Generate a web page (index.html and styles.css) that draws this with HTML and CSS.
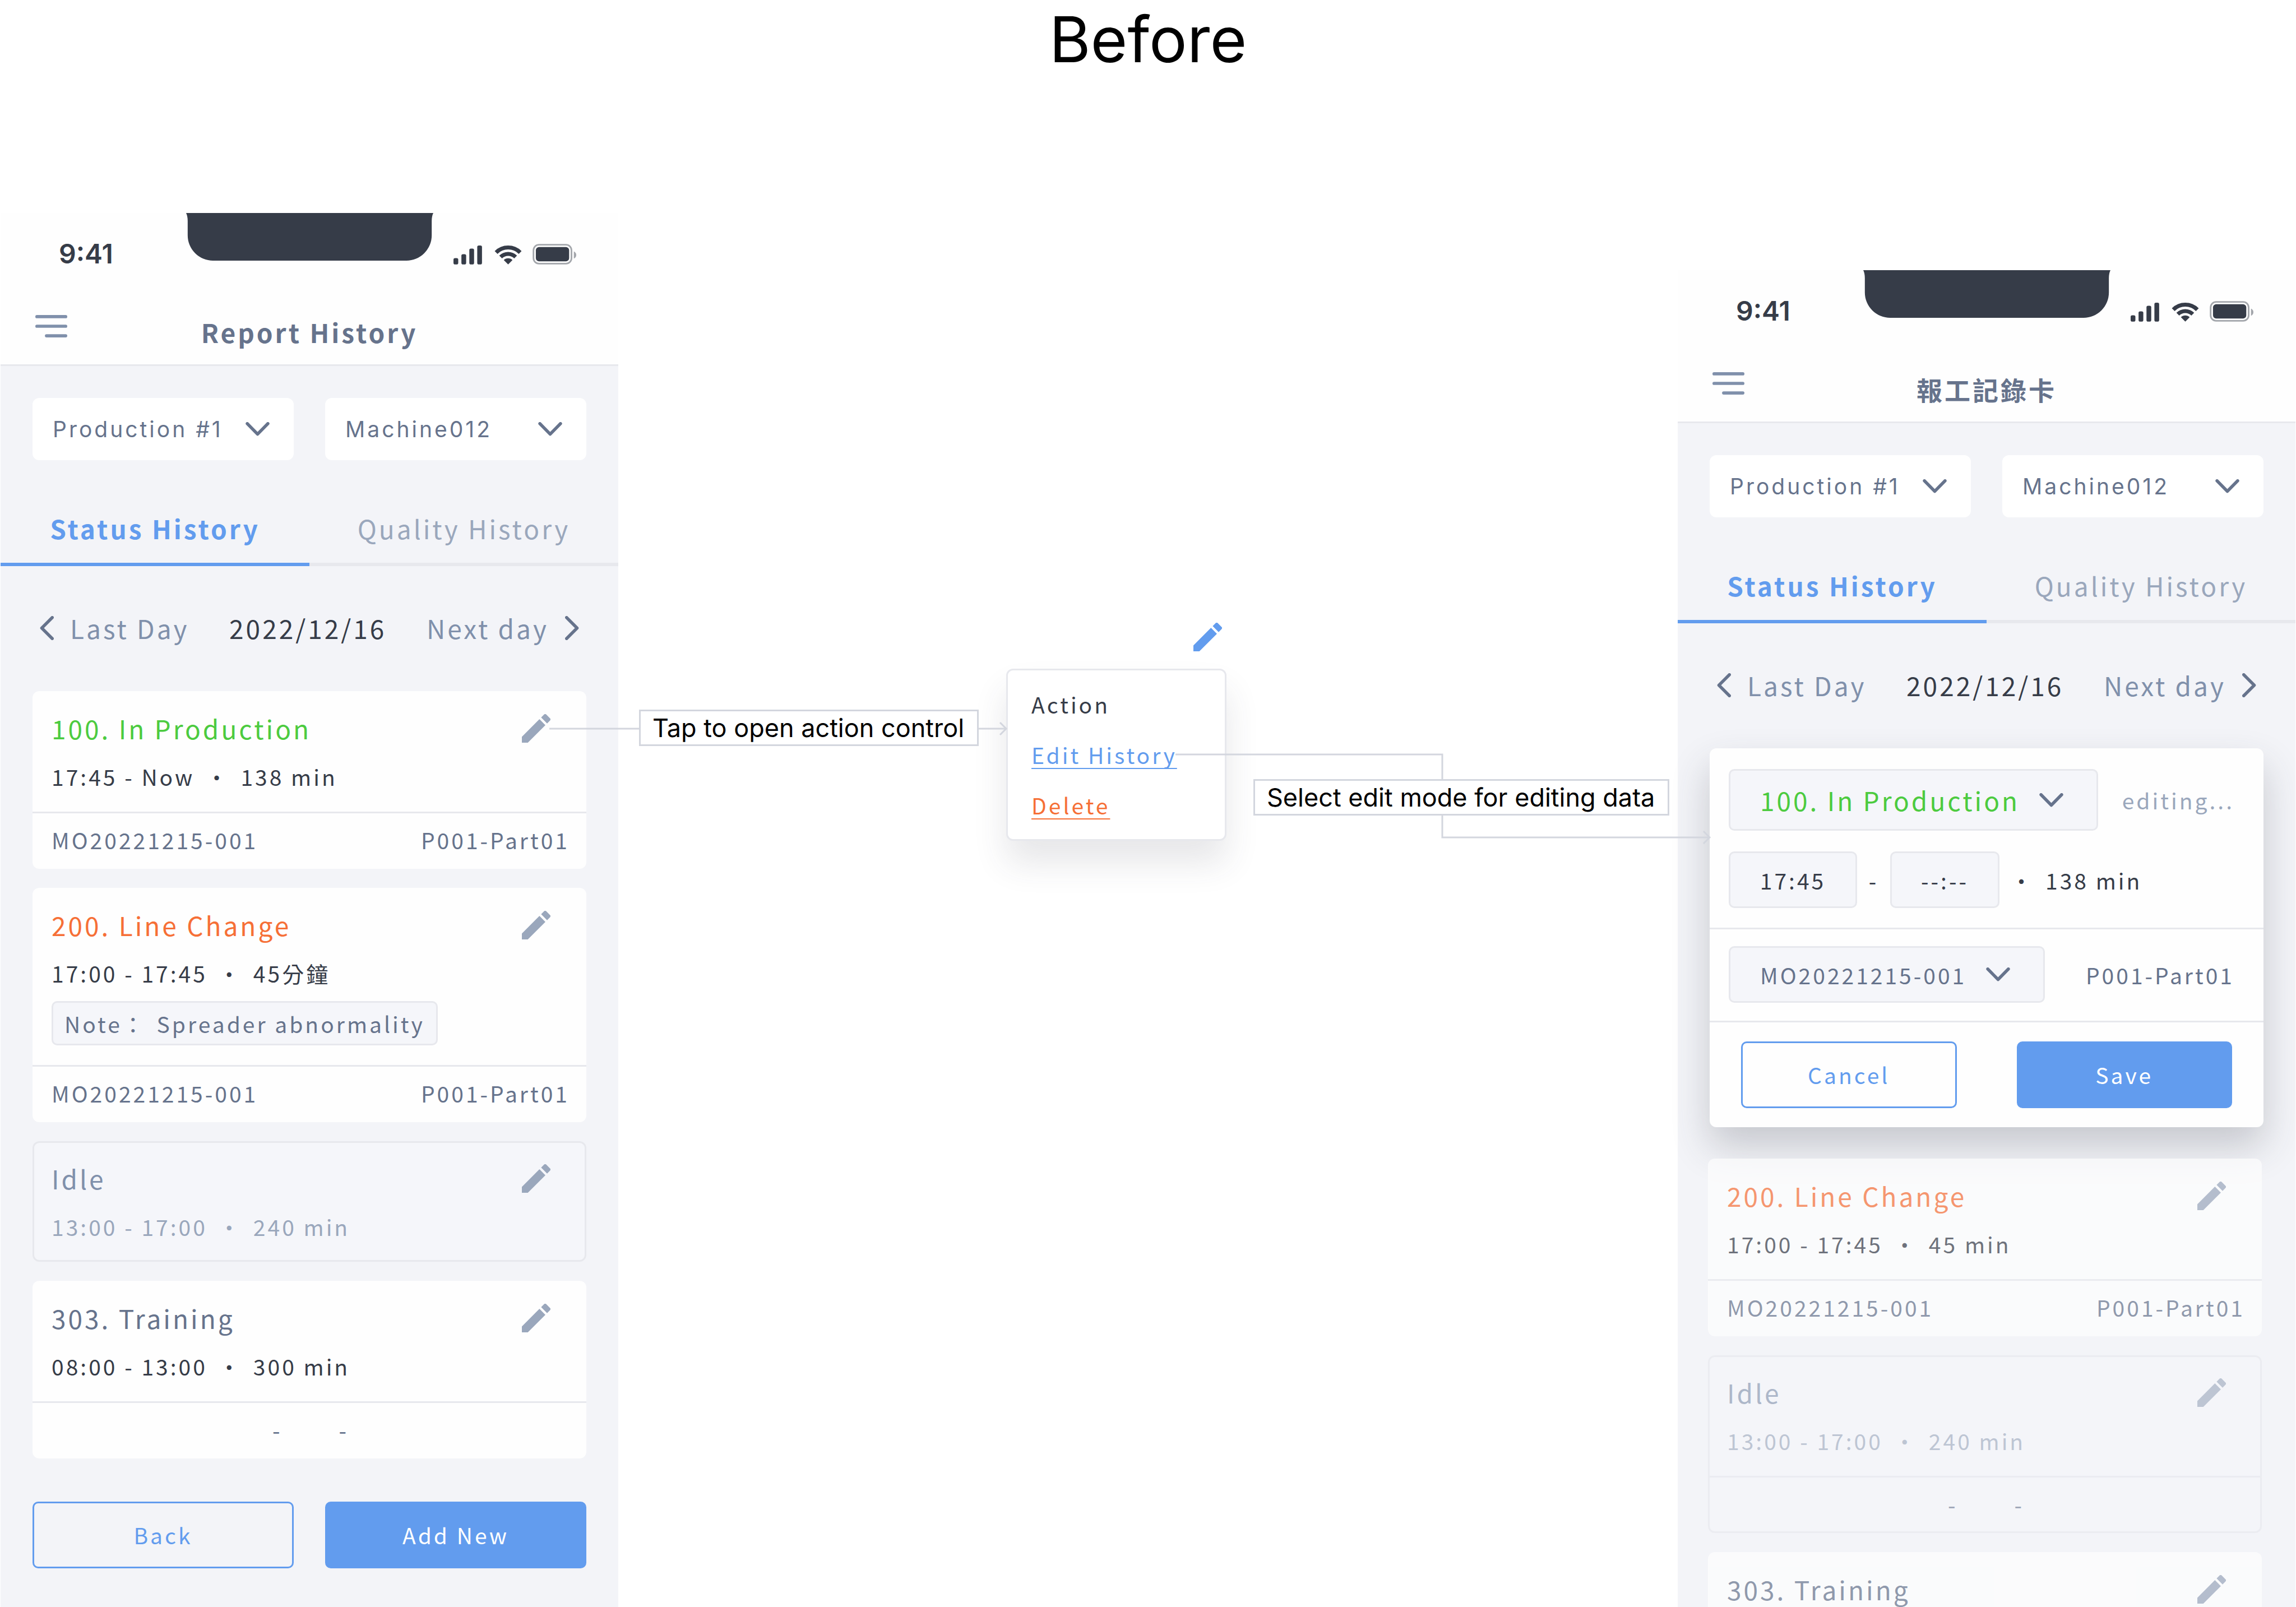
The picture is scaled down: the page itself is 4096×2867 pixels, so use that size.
FILE: index.html
```html
<!DOCTYPE html>
<html lang="en">
<head>
<meta charset="utf-8">
<meta name="viewport" content="width=device-width, initial-scale=1">
<title>Before</title>
<link rel="stylesheet" href="styles.css">
</head>
<body>
<svg class="sprite" aria-hidden="true">
  <symbol id="pencil" viewBox="3 3 18 18"><path fill="currentColor" d="M3 17.25V21h3.75L17.81 9.94l-3.75-3.75L3 17.25zM20.71 7.04a1 1 0 0 0 0-1.41l-2.34-2.34a1 1 0 0 0-1.41 0l-1.83 1.83 3.75 3.75 1.83-1.83z"/></symbol>
  <symbol id="down" viewBox="0 0 61 36"><path d="M4 4l26.500 27L57 4" fill="none" stroke="currentColor" stroke-width="8" stroke-linecap="round" stroke-linejoin="round"/></symbol>
  <symbol id="left" viewBox="0 0 36 62"><path d="M32 4L5 31l27 27" fill="none" stroke="currentColor" stroke-width="8" stroke-linecap="round" stroke-linejoin="round"/></symbol>
  <symbol id="right" viewBox="0 0 36 62"><path d="M4 4l27 27L4 58" fill="none" stroke="currentColor" stroke-width="8" stroke-linecap="round" stroke-linejoin="round"/></symbol>
  <symbol id="menu" viewBox="0 0 80 56"><path d="M4 4h72M4 28h72M28 52h48" fill="none" stroke="currentColor" stroke-width="8" stroke-linecap="round"/></symbol>
  <symbol id="notch" viewBox="0 0 624 120"><path fill="currentColor" d="M0 0Q4 8 4 20V56A64 64 0 0 0 68 120H556A64 64 0 0 0 620 56V20Q620 8 624 0Z"/></symbol>
  <symbol id="signals" viewBox="0 0 310 52">
    <g fill="currentColor">
      <rect x="0" y="36" width="12" height="16" rx="4"/><rect x="20" y="26" width="12" height="26" rx="4"/><rect x="40" y="12" width="12" height="40" rx="4"/><rect x="60" y="4" width="12" height="48" rx="4"/>
      <path d="M138 52L127 41A15.500 15.500 0 0 1 149 41Z"/>
      <rect x="208" y="8" width="84" height="36" rx="8"/>
      <path d="M304 19Q310 22 310 28T304 37Z" opacity=".45"/>
    </g>
    <g fill="none" stroke="currentColor">
      <path stroke-width="10" d="M107.600 21.600A43 43 0 0 1 168.400 21.600M119.100 33.100A26.700 26.700 0 0 1 156.900 33.100"/>
      <rect x="202" y="2" width="96" height="48" rx="14" stroke-width="4" opacity=".45"/>
    </g>
  </symbol>
</svg>

<h1 class="page-title">Before</h1>

<main class="board">
  <section class="phone" aria-label="Report History">
    <div class="status-bar">
      <svg class="notch"><use href="#notch"/></svg>
      <span class="clock">9:41</span>
      <svg class="signals"><use href="#signals"/></svg>
    </div>
    <header class="app-bar">
      <button class="icon-button menu" aria-label="Menu"><svg><use href="#menu"/></svg></button>
      <h2 class="app-title">Report History</h2>
    </header>
    <div class="filters">
      <div class="dropdown">
        <select class="filter" aria-label="Production line"><option>Production #1</option></select>
        <svg class="caret"><use href="#down"/></svg>
      </div>
      <div class="dropdown">
        <select class="filter" aria-label="Machine"><option>Machine012</option></select>
        <svg class="caret"><use href="#down"/></svg>
      </div>
    </div>
    <nav class="tabs">
      <button class="tab tab-active">Status History</button>
      <button class="tab">Quality History</button>
    </nav>
    <div class="day-nav">
      <button class="day"><svg><use href="#left"/></svg>Last Day</button>
      <time class="date">2022/12/16</time>
      <button class="day">Next day<svg><use href="#right"/></svg></button>
    </div>
    <div class="cards">
      <article class="card">
        <div class="card-head">
          <div class="card-title"><h3 class="green">100. In Production</h3><button class="icon-button edit" aria-label="Edit"><svg><use href="#pencil"/></svg></button></div>
          <p class="times">17:45 - Now<span class="dot">・</span>138 min</p>
        </div>
        <div class="card-foot"><span>MO20221215-001</span><span>P001-Part01</span></div>
      </article>
      <article class="card">
        <div class="card-head">
          <div class="card-title"><h3 class="orange">200. Line Change</h3><button class="icon-button edit" aria-label="Edit"><svg><use href="#pencil"/></svg></button></div>
          <p class="times" lang="zh-Hant">17:00 - 17:45<span class="dot">・</span>45分鐘</p>
          <p class="note" lang="zh-Hant">Note： <span class="note-text">Spreader abnormality</span></p>
        </div>
        <div class="card-foot"><span>MO20221215-001</span><span>P001-Part01</span></div>
      </article>
      <article class="card card-idle">
        <div class="card-head">
          <div class="card-title"><h3>Idle</h3><button class="icon-button edit" aria-label="Edit"><svg><use href="#pencil"/></svg></button></div>
          <p class="times">13:00 - 17:00<span class="dot">・</span>240 min</p>
        </div>
      </article>
      <article class="card">
        <div class="card-head">
          <div class="card-title"><h3>303. Training</h3><button class="icon-button edit" aria-label="Edit"><svg><use href="#pencil"/></svg></button></div>
          <p class="times">08:00 - 13:00<span class="dot">・</span>300 min</p>
        </div>
        <div class="card-foot card-foot-empty"><span>-</span><span>-</span></div>
      </article>
    </div>
    <div class="page-actions">
      <button class="button">Back</button>
      <button class="button button-primary">Add New</button>
    </div>
  </section>

  <section class="flow" aria-label="Action menu">
    <div class="action-node">
      <svg class="action-pencil"><use href="#pencil"/></svg>
      <div class="popup">
        <span>Action</span>
        <a href="#edit" class="link-edit">Edit History</a>
        <a href="#delete" class="link-delete">Delete</a>
      </div>
    </div>
    <svg class="wires" aria-hidden="true">
      <path d="M-123 920H692M681 909L692 920L681 931"/>
      <path d="M994 966H1470V1114H1947M1936 1103L1947 1114L1936 1125"/>
    </svg>
    <p class="label label-tap">Tap to open action control</p>
    <p class="label label-select">Select edit mode for editing data</p>
  </section>

  <section class="phone phone-edit" aria-label="報工記錄卡">
    <div class="status-bar">
      <svg class="notch"><use href="#notch"/></svg>
      <span class="clock">9:41</span>
      <svg class="signals"><use href="#signals"/></svg>
    </div>
    <header class="app-bar">
      <button class="icon-button menu" aria-label="Menu"><svg><use href="#menu"/></svg></button>
      <h2 class="app-title" lang="zh-Hant">報工記錄卡</h2>
    </header>
    <div class="filters">
      <div class="dropdown">
        <select class="filter" aria-label="Production line"><option>Production #1</option></select>
        <svg class="caret"><use href="#down"/></svg>
      </div>
      <div class="dropdown">
        <select class="filter" aria-label="Machine"><option>Machine012</option></select>
        <svg class="caret"><use href="#down"/></svg>
      </div>
    </div>
    <nav class="tabs">
      <button class="tab tab-active">Status History</button>
      <button class="tab">Quality History</button>
    </nav>
    <div class="day-nav">
      <button class="day"><svg><use href="#left"/></svg>Last Day</button>
      <time class="date">2022/12/16</time>
      <button class="day">Next day<svg><use href="#right"/></svg></button>
    </div>
    <form class="card edit-card">
      <div class="edit-main">
        <div class="edit-row">
          <div class="dropdown">
            <select class="field field-status" aria-label="Status"><option>100. In Production</option></select>
            <svg class="caret caret-inset"><use href="#down"/></svg>
          </div>
          <span class="editing">editing...</span>
        </div>
        <div class="time-row">
          <input class="field time-start" aria-label="Start time" value="17:45">
          <span class="dash">-</span>
          <input class="field time-end" aria-label="End time" value="--:--">
          <span class="dot">・</span>
          <span>138 min</span>
        </div>
      </div>
      <div class="edit-row edit-order">
        <div class="dropdown">
          <select class="field" aria-label="Order"><option>MO20221215-001</option></select>
          <svg class="caret caret-inset"><use href="#down"/></svg>
        </div>
        <span>P001-Part01</span>
      </div>
      <div class="edit-actions">
        <button type="button" class="button">Cancel</button>
        <button type="button" class="button button-primary">Save</button>
      </div>
    </form>
    <div class="cards cards-faded">
      <article class="card">
        <div class="card-head">
          <div class="card-title"><h3 class="orange">200. Line Change</h3><button class="icon-button edit" aria-label="Edit"><svg><use href="#pencil"/></svg></button></div>
          <p class="times">17:00 - 17:45<span class="dot">・</span>45 min</p>
        </div>
        <div class="card-foot"><span>MO20221215-001</span><span>P001-Part01</span></div>
      </article>
      <article class="card card-idle">
        <div class="card-head">
          <div class="card-title"><h3>Idle</h3><button class="icon-button edit" aria-label="Edit"><svg><use href="#pencil"/></svg></button></div>
          <p class="times">13:00 - 17:00<span class="dot">・</span>240 min</p>
        </div>
        <div class="card-foot card-foot-empty"><span>-</span><span>-</span></div>
      </article>
      <article class="card">
        <div class="card-head">
          <div class="card-title"><h3>303. Training</h3><button class="icon-button edit" aria-label="Edit"><svg><use href="#pencil"/></svg></button></div>
        </div>
      </article>
    </div>
  </section>
</main>
</body>
</html>
```
FILE: styles.css
```css
:root {
  --ink: #363c48;
  --slate: #66738c;
  --slate-mid: #8090ab;
  --slate-light: #9aa7bc;
  --blue: #629cee;
  --green: #4ccb3f;
  --orange: #f66f36;
  --line: #e7e8ed;
  --wire: #d3d6de;
  --page: #f3f4f8;
  --field: #f5f6fa;
}

* {
  box-sizing: border-box;
  margin: 0;
  padding: 0;
}

body {
  display: flex;
  flex-direction: column;
  height: 100vh;
  overflow: hidden;
  background: #fff;
  color: var(--ink);
  font: 39px/60px "Noto Sans CJK TC", "Noto Sans", sans-serif;
}

button,
select,
input {
  border: 0;
  background: none;
  color: inherit;
  font: inherit;
  letter-spacing: inherit;
}

svg {
  display: block;
  flex: none;
}

.sprite {
  position: absolute;
  width: 0;
  height: 0;
}

.page-title {
  margin-bottom: 240px;
  color: #000;
  font: 400 113px/140px Inter, sans-serif;
  text-align: center;
}

.board {
  display: grid;
  flex: 1;
  grid-template-columns: 1102fr 1890fr 1102fr;
  padding: 0 1px;
}

/* Phone frame */

.phone {
  background: var(--page);
  letter-spacing: 4px;
}

.phone-edit {
  margin-top: 102px;
}

.status-bar {
  position: relative;
  display: flex;
  align-items: center;
  justify-content: space-between;
  height: 133px;
  padding: 13px 75px 0 104px;
  background: #fefefe;
}

.notch {
  position: absolute;
  top: 0;
  left: 50%;
  width: 441px;
  height: 85px;
  margin-left: -220px;
}

.clock {
  font: 600 48px/60px Inter, sans-serif;
  letter-spacing: 0;
}

.signals {
  width: 219px;
  height: 37px;
}

.app-bar {
  display: grid;
  grid-template-columns: 1fr auto 1fr;
  align-items: start;
  height: 140px;
  padding: 49px 62px 0;
  border-bottom: 3px solid var(--line);
  background: #fefefe;
}

.app-title {
  color: var(--slate);
  font-size: 46px;
  font-weight: 700;
}

.icon-button {
  display: flex;
}

.menu {
  color: var(--slate-mid);
}

.menu svg {
  width: 57px;
  height: 40px;
}

/* Filters */

.filters {
  display: grid;
  grid-template-columns: 1fr 1fr;
  gap: 56px;
  padding: 57px 57px 0;
}

.dropdown {
  display: grid;
  align-items: center;
  color: var(--slate);
}

.dropdown > * {
  grid-area: 1 / 1;
}

.filter {
  width: 100%;
  height: 111px;
  padding: 0 100px 0 36px;
  border-radius: 12px;
  background: #fff;
  font-family: Inter, sans-serif;
  appearance: none;
}

.caret {
  justify-self: end;
  width: 43px;
  height: 25px;
  margin-right: 43px;
  pointer-events: none;
}

.caret-inset {
  margin-right: 62px;
}

/* Tabs and day switcher */

.tabs {
  display: grid;
  grid-template-columns: 1fr 1fr;
  margin-top: 89px;
}

.tab {
  padding-bottom: 30px;
  border-bottom: 6px solid var(--line);
  color: var(--slate-light);
  font-size: 46px;
  line-height: 64px;
}

.tab-active {
  border-color: var(--blue);
  color: var(--blue);
  font-weight: 700;
}

.day-nav {
  display: flex;
  justify-content: space-between;
  padding: 78px 70px 81px;
  font-size: 46px;
  line-height: 64px;
}

.day {
  display: flex;
  align-items: center;
  gap: 29px;
  color: var(--slate-mid);
}

.day svg {
  width: 25px;
  height: 43px;
  color: var(--slate);
}

/* History cards */

.cards {
  display: grid;
  gap: 34px;
  padding: 0 57px;
}

.card {
  border-radius: 12px;
  background: #fefefe;
}

.card-head {
  padding: 34px 30px 33px 34px;
}

.card-title {
  display: flex;
  align-items: center;
  justify-content: space-between;
  color: var(--slate);
}

.card-title h3 {
  font-size: 46px;
  font-weight: 400;
  line-height: 64px;
}

.edit {
  margin-right: 34px;
  color: var(--slate-light);
}

.edit svg,
.action-pencil {
  width: 51px;
  height: 51px;
}

.card-title .green {
  color: var(--green);
}

.card-title .orange {
  color: var(--orange);
}

.times {
  margin-top: 24px;
}

.dot {
  display: inline-block;
  width: 82px;
  text-align: center;
}

.note {
  width: fit-content;
  margin: 20px 0 2px;
  padding: 7px 20px 6px;
  border: 3px solid var(--line);
  border-radius: 10px;
  background: var(--field);
  color: var(--slate);
}

.note-text {
  margin-left: 6px;
}

.card-foot {
  display: flex;
  justify-content: space-between;
  padding: 17px 30px 22px 34px;
  border-top: 3px solid var(--line);
  color: var(--slate);
}

.card-foot-empty {
  justify-content: center;
  gap: 101px;
}

.card-idle {
  background: var(--field);
  box-shadow: inset 0 0 0 3px var(--line);
}

.card-idle h3 {
  color: var(--slate-mid);
}

.card-idle .times {
  color: var(--slate-light);
}

.cards-faded {
  margin: 56px 3px 0 -3px;
}

.cards-faded .card {
  opacity: .7;
}

.cards-faded .card-idle {
  opacity: .6;
}

/* Buttons */

.page-actions {
  display: grid;
  grid-template-columns: 1fr 1fr;
  gap: 56px;
  padding: 77px 57px 68px;
}

.button {
  height: 119px;
  padding-bottom: 2px;
  border: 3px solid var(--blue);
  border-radius: 10px;
  color: var(--blue);
}

.button-primary {
  background: var(--blue);
  color: #fff;
}

/* Card in edit mode */

.edit-card {
  margin: 0 57px;
  box-shadow: 0 34px 68px rgba(54, 60, 72, .24);
}

.edit-main {
  display: grid;
  gap: 37px;
  padding: 37px 0 35px 34px;
}

.edit-row {
  display: flex;
  align-items: center;
  justify-content: space-between;
  padding-right: 52px;
  color: var(--slate);
}

.field {
  height: 101px;
  border: 3px solid var(--line);
  border-radius: 10px;
  background: var(--field);
}

select.field {
  padding: 0 136px 0 53px;
  appearance: none;
}

select.field-status {
  height: 110px;
  color: var(--green);
  font-size: 46px;
}

.editing {
  color: var(--slate-light);
}

.time-row {
  display: flex;
  align-items: center;
}

.time-start,
.time-end {
  width: 229px;
  text-align: center;
}

.time-end {
  width: 195px;
}

.dash {
  width: 59px;
  text-align: center;
}

.edit-order {
  padding: 30px 52px 32px 34px;
  border-top: 3px solid var(--line);
}

.edit-actions {
  display: grid;
  grid-template-columns: 1fr 1fr;
  gap: 107px;
  padding: 34px 56px;
  border-top: 3px solid var(--line);
}

/* Flow diagram between the phones */

.flow {
  position: relative;
  z-index: 1;
}

.wires {
  position: absolute;
  inset: 0;
  width: 100%;
  height: 100%;
  overflow: visible;
  fill: none;
  stroke: var(--wire);
  stroke-width: 3;
  pointer-events: none;
}

.action-node {
  position: absolute;
  top: 731px;
  left: 692px;
  display: flex;
  flex-direction: column;
  gap: 31px;
  width: 393px;
}

.action-pencil {
  align-self: flex-end;
  margin-right: 8px;
  color: var(--blue);
}

.popup {
  display: flex;
  flex-direction: column;
  align-items: flex-start;
  gap: 30px;
  padding: 30px 42px 31px;
  border: 3px solid var(--line);
  border-radius: 12px;
  background: #fff;
  box-shadow: 0 40px 60px rgba(54, 60, 72, .12);
  letter-spacing: 4px;
}

.popup a {
  text-decoration-thickness: 2px;
  text-decoration-skip-ink: none;
  text-underline-offset: 7px;
}

.link-edit {
  color: var(--blue);
}

.link-delete {
  color: var(--orange);
}

.label {
  position: absolute;
  padding: 2px 23px 2px 21px;
  border: 3px solid var(--wire);
  background: #fff;
  color: #000;
  font: 45px/55px Inter, sans-serif;
  white-space: nowrap;
}

.label-tap {
  top: 886px;
  left: 37px;
}

.label-select {
  top: 1010px;
  left: 1133px;
}
```
